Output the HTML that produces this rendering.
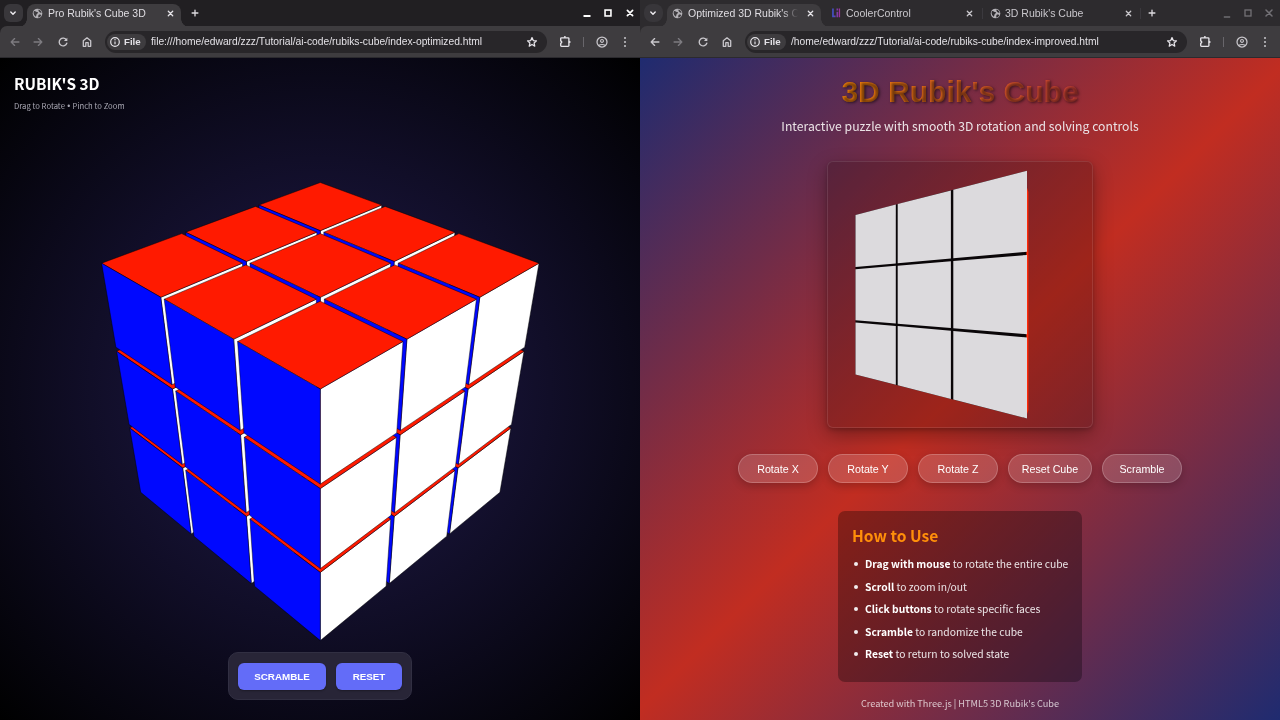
<!DOCTYPE html>
<html lang="en">
<head>
<meta charset="utf-8">
<title>Rubik's Cube comparison</title>
<style>
*{box-sizing:border-box;margin:0;padding:0}
html,body{width:1280px;height:720px;overflow:hidden;background:#000}
body{position:relative;font-family:"Liberation Sans",sans-serif;-webkit-font-smoothing:antialiased}
.win{position:absolute;top:0;width:640px;height:720px;overflow:hidden}
#w1{left:0}
#w2{left:640px}
/* ---------- browser chrome ---------- */
.strip{position:absolute;left:0;top:0;width:640px;height:40px;background:#211f22}
#w2 .strip{background:#2d2b2e}
.toolbar{position:absolute;left:0;top:26px;width:640px;height:32px;background:#3e3c3f;border-bottom:1px solid #2b2a2e;border-radius:7px 0 0 0}
.tsearch{position:absolute;left:4px;top:4px;width:19px;height:17.5px;border-radius:6px;background:#39373b}
#w2 .tsearch{border-radius:8px;background:#38363a}
.tab{position:absolute;top:4px;height:23px;border-radius:8px 8px 0 0;background:#3e3c3f}
.tab:before,.tab:after{content:"";position:absolute;bottom:0;width:8px;height:8px;background:radial-gradient(circle at 0 0,rgba(0,0,0,0) 7.5px,#3e3c3f 8px)}
.tab:before{left:-8px}
.tab:after{right:-8px;background:radial-gradient(circle at 100% 0,rgba(0,0,0,0) 7.5px,#3e3c3f 8px)}
.ttl,.url,.chip span,#p1 h1,#p1 .sub,.panel1 b,#p2 .lead,.btn2,.howto h2,.howto p,.foot{will-change:transform}
.ttl{position:absolute;top:7px;font-size:10.5px;line-height:13px;color:#dfdde2;white-space:nowrap;overflow:hidden}
.ttl.in{color:#c9c7cc}
.ico{position:absolute;overflow:visible}
.omni{position:absolute;left:105px;top:31px;width:442px;height:22px;border-radius:11px;background:#282629}
.chip{position:absolute;left:2.3px;top:3px;width:38.3px;height:15.6px;border-radius:8px;background:#3e3c3f}
.chip span{position:absolute;left:16.4px;top:1.3px;font-size:9.7px;line-height:13px;font-weight:bold;color:#e3e1e6}
.url{position:absolute;left:46.3px;top:4.2px;font-size:10.27px;line-height:13px;color:#e3e1e6;white-space:nowrap}
.sep{position:absolute;top:37px;width:1px;height:10px;background:#68666b}
.tsep{position:absolute;top:8px;width:1px;height:11px;background:#3b393e}
/* ---------- page 1 ---------- */
.page{position:absolute;left:0;top:58px;width:640px;height:662px;overflow:hidden}
#p1{background:radial-gradient(circle farthest-corner at 50% 50%,#221c50 0%,#000 100%)}
#p1 h1{position:absolute;left:14px;top:13.5px;font-family:"Noto Sans CJK SC","DejaVu Sans",sans-serif;font-weight:700;font-size:15.4px;line-height:22px;color:#fff;white-space:nowrap;letter-spacing:0}
#p1 .sub{position:absolute;left:14px;top:42px;font-family:"Noto Sans CJK SC","DejaVu Sans",sans-serif;font-size:7.7px;line-height:12px;color:#a9a8b3;white-space:nowrap}
#p1 svg.cube{position:absolute;left:0;top:0}
.panel1{position:absolute;left:228px;top:594px;width:184px;height:48px;border-radius:10px;background:#282537;border:1px solid #312f42}
.panel1 b{position:absolute;top:9.5px;height:27px;border-radius:6px;background:#636cf8;color:#fff;font-size:9.8px;line-height:27.3px;text-align:center;font-weight:bold;box-shadow:0 1px 2px rgba(0,0,0,.3)}
/* ---------- page 2 ---------- */
#p2{background:linear-gradient(135deg,#1f2b70 0%,#c12d21 50%,#1f2b70 100%);font-family:"Noto Sans CJK SC","DejaVu Sans",sans-serif;color:#fff}
#p2 h1{position:absolute;left:0;width:640px;top:12px;text-align:center;font-family:"Liberation Sans",sans-serif;font-size:30px;line-height:44px;font-weight:700;white-space:nowrap}
#p2 h1 span{display:inline-block;background:linear-gradient(90deg,#ee800a 0%,#cc4038 100%);-webkit-background-clip:text;background-clip:text;color:transparent;text-shadow:1.3px 1.3px 2.7px rgba(0,0,0,.5)}
#p2 .lead{position:absolute;left:0;width:640px;top:59px;text-align:center;font-size:12.2px;line-height:18px;color:#ebe3e6;white-space:nowrap}
.stage{position:absolute;left:187px;top:103px;width:266px;height:267px;border-radius:6px;background:rgba(20,0,0,.2);border:1px solid rgba(255,255,255,.1);box-shadow:0 7px 20px rgba(0,0,0,.32),0 2px 4px rgba(0,0,0,.18)}
#p2 svg.cube{position:absolute;left:0;top:0}
.btn2{position:absolute;top:396.4px;height:29px;border-radius:15px;background:rgba(255,255,255,.16);border:1px solid rgba(255,255,255,.2);color:#fff;font-family:"Liberation Sans",sans-serif;font-size:10.7px;line-height:28px;text-align:center;box-shadow:0 3px 8px rgba(0,0,0,.2)}
.howto{position:absolute;left:198px;top:453px;width:244px;height:171px;border-radius:7px;background:rgba(0,0,0,.3)}
.howto h2{position:absolute;left:14px;top:13px;font-size:15.6px;line-height:22px;font-weight:700;color:#ff8f0a;white-space:nowrap}
.howto p{position:absolute;left:27px;font-size:10.3px;line-height:16px;color:#ece6e8;white-space:nowrap}
.howto p b{font-weight:700;color:#fff}
.howto p:before{content:"";position:absolute;left:-11.5px;top:6px;width:4px;height:4px;border-radius:50%;background:#f1ecee}
.foot{position:absolute;left:0;width:640px;top:637.6px;text-align:center;font-size:9.2px;line-height:14px;color:rgba(255,255,255,.72);white-space:nowrap}
</style>
</head>
<body>
<!-- ================= WINDOW 1 ================= -->
<div class="win" id="w1">
  <div class="strip"></div>
  <div class="tsearch"></div>
  <div class="tab" style="left:27px;width:154px"></div>
  <div class="toolbar"></div>
  <div class="ttl" style="left:48px;width:112px">Pro Rubik's Cube 3D</div>
  <div class="omni"><div class="chip"><span>File</span></div><div class="url">file:///home/edward/zzz/Tutorial/ai-code/rubiks-cube/index-optimized.html</div></div>
  <div class="sep" style="left:583px"></div>
  <svg class="ico" style="left:8.30px;top:9.20px" width="10" height="8" viewBox="-5.0 -4.0 10 8" ><path d="M-2.2,-1 L0,1.2 L2.2,-1" fill="none" stroke="#f0eef2" stroke-width="1.4" stroke-linecap="round" stroke-linejoin="round"/></svg>
  <svg class="ico" style="left:31.60px;top:7.80px" width="11" height="11" viewBox="-5.5 -5.5 11 11" ><circle r="4.8" fill="#b3b1b6"/><path d="M-3.6,-2.6 C-2,-2.8 -1.2,-1.6 -0.2,-1.5 C0.9,-1.4 0.6,-0.2 -0.4,0.3 C-1.4,0.8 -0.8,2.2 -1.8,3.2 C-3,2.4 -4,0.8 -3.9,-0.9 Z M1.2,-4 C2.6,-3.6 3.8,-2.4 4.1,-0.9 C3.2,-0.4 2.4,-0.9 1.7,-1.7 C1,-2.5 0.6,-3.3 1.2,-4 Z M1.6,1 C2.6,0.7 3.6,1.1 3.7,1.7 C3.3,2.9 2.3,3.8 1.1,4.2 C0.5,3.4 0.6,1.5 1.6,1 Z" fill="#3e3c3f"/></svg>
  <svg class="ico" style="left:165.80px;top:8.80px" width="9" height="9" viewBox="-4.5 -4.5 9 9" ><path d="M-2.2,-2.2 L2.2,2.2 M2.2,-2.2 L-2.2,2.2" fill="none" stroke="#e6e4e9" stroke-width="1.3" stroke-linecap="round"/></svg>
  <svg class="ico" style="left:189.50px;top:8.30px" width="10" height="10" viewBox="-5.0 -5.0 10 10" ><path d="M-2.9,0 H2.9 M0,-2.9 V2.9" fill="none" stroke="#dddbe0" stroke-width="1.3" stroke-linecap="round"/></svg>
  <svg class="ico" style="left:581.50px;top:14.10px" width="10" height="4" viewBox="-5.0 -2.0 10 4" ><path d="M-3.5,0 H3.5" stroke="#ffffff" stroke-width="2" fill="none"/></svg>
  <svg class="ico" style="left:603.10px;top:8.40px" width="10" height="10" viewBox="-5.0 -5.0 10 10" ><rect x="-2.95" y="-2.95" width="5.9" height="5.9" fill="none" stroke="#ffffff" stroke-width="1.6"/></svg>
  <svg class="ico" style="left:624.50px;top:8.40px" width="10" height="10" viewBox="-5.0 -5.0 10 10" ><path d="M-2.6,-2.6 L2.6,2.6 M2.6,-2.6 L-2.6,2.6" fill="none" stroke="#ffffff" stroke-width="1.7" stroke-linecap="round"/></svg>
  <svg class="ico" style="left:8.90px;top:37.00px" width="12" height="10" viewBox="-6.0 -5.0 12 10" ><path d="M3.9,0 H-3.6 M-0.4,-3.4 L-3.8,0 L-0.4,3.4" fill="none" stroke="#7d7b80" stroke-width="1.35" stroke-linecap="round" stroke-linejoin="round"/></svg>
  <svg class="ico" style="left:32.40px;top:37.00px" width="12" height="10" viewBox="-6.0 -5.0 12 10" ><path d="M-3.9,0 H3.6 M0.4,-3.4 L3.8,0 L0.4,3.4" fill="none" stroke="#7d7b80" stroke-width="1.35" stroke-linecap="round" stroke-linejoin="round"/></svg>
  <svg class="ico" style="left:56.60px;top:36.00px" width="12" height="12" viewBox="-6.0 -6.0 12 12" ><path d="M3.5,-1.9 A3.9,3.9 0 1 0 3.8,1.2" fill="none" stroke="#c9c7cc" stroke-width="1.35" stroke-linecap="round"/><path d="M4.3,-4.3 V-0.9 H0.9 Z" fill="#c9c7cc"/></svg>
  <svg class="ico" style="left:80.50px;top:36.00px" width="12" height="12" viewBox="-6.0 -6.0 12 12" ><path d="M-3.7,4.3 V-1.3 L0,-4.2 L3.7,-1.3 V4.3 H1.2 V0.6 H-1.2 V4.3 Z" fill="none" stroke="#c9c7cc" stroke-width="1.3" stroke-linejoin="round"/></svg>
  <svg class="ico" style="left:109.30px;top:35.90px" width="12" height="12" viewBox="-6.0 -6.0 12 12" ><circle r="4.3" fill="none" stroke="#e6e4e9" stroke-width="1.2"/><path d="M0,-0.6 V2.3" stroke="#e6e4e9" stroke-width="1.2" fill="none"/><circle cy="-2.2" r="0.7" fill="#e6e4e9"/></svg>
  <svg class="ico" style="left:526.00px;top:36.00px" width="12" height="12" viewBox="-6.0 -6.0 12 12" ><polygon points="0.00,-4.40 1.29,-1.48 4.47,-1.15 2.09,0.98 2.76,4.10 0.00,2.50 -2.76,4.10 -2.09,0.98 -4.47,-1.15 -1.29,-1.48" fill="none" stroke="#e6e4e9" stroke-width="1.25" stroke-linejoin="round"/></svg>
  <svg class="ico" style="left:558.20px;top:35.00px" width="14" height="14" viewBox="-7.0 -7.0 14 14" ><path d="M-4.3,-1 V-3.4 a.8,.8 0 0 1 .8,-.8 H3.1 a.8,.8 0 0 1 .8,.8 V3.5 a.8,.8 0 0 1 -.8,.8 H-3.5 a.8,.8 0 0 1 -.8,-.8 V1.1 a1.05,1.05 0 0 0 0,-2.1 Z" fill="none" stroke="#e6e4e9" stroke-width="1.35" stroke-linejoin="round"/><circle cx="-0.1" cy="-4.9" r="1" fill="#e6e4e9"/><circle cx="4.6" cy="0" r="1" fill="#e6e4e9"/></svg>
  <svg class="ico" style="left:594.50px;top:35.00px" width="14" height="14" viewBox="-7.0 -7.0 14 14" ><circle r="5" fill="none" stroke="#c9c7cc" stroke-width="1.25"/><circle cy="-1.1" r="1.45" fill="none" stroke="#c9c7cc" stroke-width="1.05"/><path d="M-3,3.2 C-1.6,2.2 1.6,2.2 3,3.2" fill="none" stroke="#c9c7cc" stroke-width="1.15"/></svg>
  <svg class="ico" style="left:623.30px;top:35.00px" width="4" height="14" viewBox="-2.0 -7.0 4 14" ><circle cy="-4.1" r="1" fill="#c9c7cc"/><circle r="1" fill="#c9c7cc"/><circle cy="4.1" r="1" fill="#c9c7cc"/></svg>
  <div class="page" id="p1">
    <svg class="cube" width="640" height="662" viewBox="0 0 640 662" stroke="#000" stroke-opacity=".7" stroke-width=".65" stroke-linejoin="round"><polygon points="320.3,331.0 374.7,299.7 371.9,360.7 320.3,393.5" fill="#ffffff"/><polygon points="320.3,331.0 374.7,299.7 320.3,271.7 265.9,299.7" fill="#ff1a00"/><polygon points="320.3,331.0 265.9,299.7 268.7,360.7 320.3,393.5" fill="#0008ff"/><polygon points="255.9,368.0 317.3,332.7 317.4,395.4 259.6,432.2" fill="#ffffff"/><polygon points="255.9,368.0 317.3,332.7 262.9,301.3 202.0,332.7" fill="#ff1a00"/><polygon points="255.9,368.0 202.0,332.7 208.4,395.4 259.6,432.2" fill="#0008ff"/><polygon points="320.3,256.9 378.0,228.0 374.8,296.3 320.3,327.5" fill="#ffffff"/><polygon points="320.3,256.9 378.0,228.0 320.3,202.3 262.6,228.0" fill="#ff1a00"/><polygon points="320.3,256.9 262.6,228.0 265.8,296.3 320.3,327.5" fill="#0008ff"/><polygon points="384.7,368.0 438.6,332.7 432.2,395.4 381.0,432.2" fill="#ffffff"/><polygon points="384.7,368.0 438.6,332.7 377.7,301.3 323.3,332.7" fill="#ff1a00"/><polygon points="384.7,368.0 323.3,332.7 323.2,395.4 381.0,432.2" fill="#0008ff"/><polygon points="182.7,410.1 252.5,370.0 256.4,434.3 191.1,475.9" fill="#ffffff"/><polygon points="182.7,410.1 252.5,370.0 198.6,334.5 129.7,370.0" fill="#ff1a00"/><polygon points="182.7,410.1 129.7,370.0 140.7,434.3 191.1,475.9" fill="#0008ff"/><polygon points="251.5,291.4 317.1,258.6 317.3,329.2 255.7,364.4" fill="#ffffff"/><polygon points="251.5,291.4 317.1,258.6 259.4,229.5 194.3,258.6" fill="#ff1a00"/><polygon points="251.5,291.4 194.3,258.6 201.6,329.2 255.7,364.4" fill="#0008ff"/><polygon points="320.3,172.7 381.7,147.1 378.1,224.2 320.3,253.0" fill="#ffffff"/><polygon points="320.3,172.7 381.7,147.1 320.3,124.5 258.9,147.1" fill="#ff1a00"/><polygon points="320.3,172.7 258.9,147.1 262.5,224.2 320.3,253.0" fill="#0008ff"/><polygon points="320.3,410.1 381.7,370.0 378.1,434.3 320.3,475.9" fill="#ffffff"/><polygon points="320.3,410.1 381.7,370.0 320.3,334.5 258.9,370.0" fill="#ff1a00"/><polygon points="320.3,410.1 258.9,370.0 262.5,434.3 320.3,475.9" fill="#0008ff"/><polygon points="389.1,291.4 446.3,258.6 439.0,329.2 384.9,364.4" fill="#ffffff"/><polygon points="389.1,291.4 446.3,258.6 381.2,229.5 323.5,258.6" fill="#ff1a00"/><polygon points="389.1,291.4 323.5,258.6 323.3,329.2 384.9,364.4" fill="#0008ff"/><polygon points="457.9,410.1 510.9,370.0 499.9,434.3 449.5,475.9" fill="#ffffff"/><polygon points="457.9,410.1 510.9,370.0 442.0,334.5 388.1,370.0" fill="#ff1a00"/><polygon points="457.9,410.1 388.1,370.0 384.2,434.3 449.5,475.9" fill="#0008ff"/><polygon points="172.5,331.0 247.8,293.3 252.3,366.4 182.2,406.4" fill="#ffffff"/><polygon points="172.5,331.0 247.8,293.3 190.7,260.2 116.6,293.3" fill="#ff1a00"/><polygon points="172.5,331.0 116.6,293.3 129.1,366.4 182.2,406.4" fill="#0008ff"/><polygon points="246.4,203.5 316.8,174.2 317.1,254.6 251.3,287.3" fill="#ffffff"/><polygon points="246.4,203.5 316.8,174.2 255.5,148.4 185.7,174.2" fill="#ff1a00"/><polygon points="246.4,203.5 185.7,174.2 193.9,254.6 251.3,287.3" fill="#0008ff"/><polygon points="246.4,458.5 316.8,412.4 317.1,478.2 251.3,525.6" fill="#ffffff"/><polygon points="246.4,458.5 316.8,412.4 255.5,372.0 185.7,412.4" fill="#ff1a00"/><polygon points="246.4,458.5 185.7,412.4 193.9,478.2 251.3,525.6" fill="#0008ff"/><polygon points="320.3,331.0 385.9,293.3 381.9,366.4 320.3,406.4" fill="#ffffff"/><polygon points="320.3,331.0 385.9,293.3 320.3,260.2 254.7,293.3" fill="#ff1a00"/><polygon points="320.3,331.0 254.7,293.3 258.7,366.4 320.3,406.4" fill="#0008ff"/><polygon points="394.2,203.5 454.9,174.2 446.7,254.6 389.3,287.3" fill="#ffffff"/><polygon points="394.2,203.5 454.9,174.2 385.1,148.4 323.8,174.2" fill="#ff1a00"/><polygon points="394.2,203.5 323.8,174.2 323.5,254.6 389.3,287.3" fill="#0008ff"/><polygon points="394.2,458.5 454.9,412.4 446.7,478.2 389.3,525.6" fill="#ffffff"/><polygon points="394.2,458.5 454.9,412.4 385.1,372.0 323.8,412.4" fill="#ff1a00"/><polygon points="394.2,458.5 323.8,412.4 323.5,478.2 389.3,525.6" fill="#0008ff"/><polygon points="468.1,331.0 524.0,293.3 511.5,366.4 458.4,406.4" fill="#ffffff"/><polygon points="468.1,331.0 524.0,293.3 449.9,260.2 392.8,293.3" fill="#ff1a00"/><polygon points="468.1,331.0 392.8,293.3 388.3,366.4 458.4,406.4" fill="#0008ff"/><polygon points="160.8,239.3 242.4,205.2 247.6,289.2 172.0,326.7" fill="#ffffff"/><polygon points="160.8,239.3 242.4,205.2 181.7,175.6 101.6,205.2" fill="#ff1a00"/><polygon points="160.8,239.3 101.6,205.2 115.9,289.2 172.0,326.7" fill="#0008ff"/><polygon points="240.5,376.9 316.6,333.1 316.8,408.7 246.1,454.7" fill="#ffffff"/><polygon points="240.5,376.9 316.6,333.1 251.0,295.1 175.7,333.1" fill="#ff1a00"/><polygon points="240.5,376.9 175.7,333.1 185.2,408.7 246.1,454.7" fill="#0008ff"/><polygon points="320.3,239.3 390.7,205.2 386.1,289.2 320.3,326.7" fill="#ffffff"/><polygon points="320.3,239.3 390.7,205.2 320.3,175.6 249.9,205.2" fill="#ff1a00"/><polygon points="320.3,239.3 249.9,205.2 254.5,289.2 320.3,326.7" fill="#0008ff"/><polygon points="320.3,514.4 390.7,461.1 386.1,528.2 320.3,582.6" fill="#ffffff"/><polygon points="320.3,514.4 390.7,461.1 320.3,414.7 249.9,461.1" fill="#ff1a00"/><polygon points="320.3,514.4 249.9,461.1 254.5,528.2 320.3,582.6" fill="#0008ff"/><polygon points="400.1,376.9 464.9,333.1 455.4,408.7 394.5,454.7" fill="#ffffff"/><polygon points="400.1,376.9 464.9,333.1 389.6,295.1 324.0,333.1" fill="#ff1a00"/><polygon points="400.1,376.9 324.0,333.1 323.8,408.7 394.5,454.7" fill="#0008ff"/><polygon points="479.8,239.3 539.0,205.2 524.7,289.2 468.6,326.7" fill="#ffffff"/><polygon points="479.8,239.3 539.0,205.2 458.9,175.6 398.2,205.2" fill="#ff1a00"/><polygon points="479.8,239.3 398.2,205.2 393.0,289.2 468.6,326.7" fill="#0008ff"/><polygon points="233.7,281.2 316.3,241.2 316.6,328.9 240.2,372.4" fill="#ffffff"/><polygon points="233.7,281.2 316.3,241.2 245.9,206.9 164.2,241.2" fill="#ff1a00"/><polygon points="233.7,281.2 164.2,241.2 175.2,328.9 240.2,372.4" fill="#0008ff"/><polygon points="320.3,430.6 396.4,379.3 391.0,457.3 320.3,510.6" fill="#ffffff"/><polygon points="320.3,430.6 396.4,379.3 320.3,335.3 244.2,379.3" fill="#ff1a00"/><polygon points="320.3,430.6 244.2,379.3 249.6,457.3 320.3,510.6" fill="#0008ff"/><polygon points="406.9,281.2 476.4,241.2 465.4,328.9 400.4,372.4" fill="#ffffff"/><polygon points="406.9,281.2 476.4,241.2 394.7,206.9 324.3,241.2" fill="#ff1a00"/><polygon points="406.9,281.2 324.3,241.2 324.0,328.9 400.4,372.4" fill="#0008ff"/><polygon points="320.3,331.0 403.0,283.5 396.7,374.9 320.3,426.1" fill="#ffffff"/><polygon points="320.3,331.0 403.0,283.5 320.3,243.2 237.6,283.5" fill="#ff1a00"/><polygon points="320.3,331.0 237.6,283.5 243.9,374.9 320.3,426.1" fill="#0008ff"/></svg>
    <h1>RUBIK'S 3D</h1>
    <div class="sub">Drag to Rotate <span style="font-family:'Liberation Sans',sans-serif;font-size:8.5px;margin:0 .6px">•</span> Pinch to Zoom</div>
    <div class="panel1"><b style="left:9.4px;width:88px">SCRAMBLE</b><b style="left:106.6px;width:66px">RESET</b></div>
  </div>
</div>
<!-- ================= WINDOW 2 ================= -->
<div class="win" id="w2">
  <div class="strip"></div>
  <div class="tsearch"></div>
  <div class="tab" style="left:27px;width:154px"></div>
  <div class="toolbar"></div>
  <div class="ttl" style="left:48px;width:110px;-webkit-mask-image:linear-gradient(90deg,#000 86%,transparent 100%);mask-image:linear-gradient(90deg,#000 86%,transparent 100%)">Optimized 3D Rubik's Cube</div>
  <div class="ttl in" style="left:206px;width:112px">CoolerControl</div>
  <div class="ttl in" style="left:365px;width:112px">3D Rubik's Cube</div>
  <div class="tsep" style="left:342px"></div>
  <div class="tsep" style="left:500px"></div>
  <div class="omni"><div class="chip"><span>File</span></div><div class="url">/home/edward/zzz/Tutorial/ai-code/rubiks-cube/index-improved.html</div></div>
  <div class="sep" style="left:583px"></div>
  <svg class="ico" style="left:8.30px;top:9.20px" width="10" height="8" viewBox="-5.0 -4.0 10 8" ><path d="M-2.2,-1 L0,1.2 L2.2,-1" fill="none" stroke="#f0eef2" stroke-width="1.4" stroke-linecap="round" stroke-linejoin="round"/></svg>
  <svg class="ico" style="left:31.60px;top:7.80px" width="11" height="11" viewBox="-5.5 -5.5 11 11" ><circle r="4.8" fill="#b3b1b6"/><path d="M-3.6,-2.6 C-2,-2.8 -1.2,-1.6 -0.2,-1.5 C0.9,-1.4 0.6,-0.2 -0.4,0.3 C-1.4,0.8 -0.8,2.2 -1.8,3.2 C-3,2.4 -4,0.8 -3.9,-0.9 Z M1.2,-4 C2.6,-3.6 3.8,-2.4 4.1,-0.9 C3.2,-0.4 2.4,-0.9 1.7,-1.7 C1,-2.5 0.6,-3.3 1.2,-4 Z M1.6,1 C2.6,0.7 3.6,1.1 3.7,1.7 C3.3,2.9 2.3,3.8 1.1,4.2 C0.5,3.4 0.6,1.5 1.6,1 Z" fill="#3e3c3f"/></svg>
  <svg class="ico" style="left:165.80px;top:8.80px" width="9" height="9" viewBox="-4.5 -4.5 9 9" ><path d="M-2.2,-2.2 L2.2,2.2 M2.2,-2.2 L-2.2,2.2" fill="none" stroke="#e6e4e9" stroke-width="1.3" stroke-linecap="round"/></svg>
  <svg class="ico" style="left:190.80px;top:7.80px" width="10" height="10" viewBox="-5.0 -5.0 10 10" ><defs><linearGradient id="ccg" x1="0" y1="0" x2="1" y2="0"><stop offset="0" stop-color="#3a55d6"/><stop offset="1" stop-color="#b42fa4"/></linearGradient></defs><path d="M-3.9,-4.4 H-2.2 V2.4 H-0.4 V4.3 H-3.9 Z M0.5,-1.2 H2.2 V4.3 H0.5 Z M0.5,-4.4 H2.2 V-2.5 H0.5 Z M2.9,-4.4 H4.1 V4.3 H2.9 Z" fill="url(#ccg)" opacity=".9"/></svg>
  <svg class="ico" style="left:324.50px;top:8.80px" width="9" height="9" viewBox="-4.5 -4.5 9 9" ><path d="M-2.2,-2.2 L2.2,2.2 M2.2,-2.2 L-2.2,2.2" fill="none" stroke="#c9c7cc" stroke-width="1.3" stroke-linecap="round"/></svg>
  <svg class="ico" style="left:349.50px;top:7.80px" width="11" height="11" viewBox="-5.5 -5.5 11 11" ><circle r="4.8" fill="#b3b1b6"/><path d="M-3.6,-2.6 C-2,-2.8 -1.2,-1.6 -0.2,-1.5 C0.9,-1.4 0.6,-0.2 -0.4,0.3 C-1.4,0.8 -0.8,2.2 -1.8,3.2 C-3,2.4 -4,0.8 -3.9,-0.9 Z M1.2,-4 C2.6,-3.6 3.8,-2.4 4.1,-0.9 C3.2,-0.4 2.4,-0.9 1.7,-1.7 C1,-2.5 0.6,-3.3 1.2,-4 Z M1.6,1 C2.6,0.7 3.6,1.1 3.7,1.7 C3.3,2.9 2.3,3.8 1.1,4.2 C0.5,3.4 0.6,1.5 1.6,1 Z" fill="#2d2b2e"/></svg>
  <svg class="ico" style="left:483.50px;top:8.80px" width="9" height="9" viewBox="-4.5 -4.5 9 9" ><path d="M-2.2,-2.2 L2.2,2.2 M2.2,-2.2 L-2.2,2.2" fill="none" stroke="#c9c7cc" stroke-width="1.3" stroke-linecap="round"/></svg>
  <svg class="ico" style="left:507.00px;top:8.30px" width="10" height="10" viewBox="-5.0 -5.0 10 10" ><path d="M-2.9,0 H2.9 M0,-2.9 V2.9" fill="none" stroke="#dddbe0" stroke-width="1.3" stroke-linecap="round"/></svg>
  <svg class="ico" style="left:581.50px;top:14.60px" width="10" height="4" viewBox="-5.0 -2.0 10 4" ><path d="M-3.2,0 H3.2" stroke="#737176" stroke-width="1.4" fill="none"/></svg>
  <svg class="ico" style="left:603.00px;top:8.30px" width="10" height="10" viewBox="-5.0 -5.0 10 10" ><rect x="-3" y="-3" width="6" height="6" fill="none" stroke="#737176" stroke-width="1.3"/></svg>
  <svg class="ico" style="left:624.30px;top:8.30px" width="10" height="10" viewBox="-5.0 -5.0 10 10" ><path d="M-3,-3 L3,3 M3,-3 L-3,3" fill="none" stroke="#737176" stroke-width="1.5" stroke-linecap="round"/></svg>
  <svg class="ico" style="left:8.90px;top:37.00px" width="12" height="10" viewBox="-6.0 -5.0 12 10" ><path d="M3.9,0 H-3.6 M-0.4,-3.4 L-3.8,0 L-0.4,3.4" fill="none" stroke="#c9c7cc" stroke-width="1.35" stroke-linecap="round" stroke-linejoin="round"/></svg>
  <svg class="ico" style="left:32.40px;top:37.00px" width="12" height="10" viewBox="-6.0 -5.0 12 10" ><path d="M-3.9,0 H3.6 M0.4,-3.4 L3.8,0 L0.4,3.4" fill="none" stroke="#7d7b80" stroke-width="1.35" stroke-linecap="round" stroke-linejoin="round"/></svg>
  <svg class="ico" style="left:56.60px;top:36.00px" width="12" height="12" viewBox="-6.0 -6.0 12 12" ><path d="M3.5,-1.9 A3.9,3.9 0 1 0 3.8,1.2" fill="none" stroke="#c9c7cc" stroke-width="1.35" stroke-linecap="round"/><path d="M4.3,-4.3 V-0.9 H0.9 Z" fill="#c9c7cc"/></svg>
  <svg class="ico" style="left:80.50px;top:36.00px" width="12" height="12" viewBox="-6.0 -6.0 12 12" ><path d="M-3.7,4.3 V-1.3 L0,-4.2 L3.7,-1.3 V4.3 H1.2 V0.6 H-1.2 V4.3 Z" fill="none" stroke="#c9c7cc" stroke-width="1.3" stroke-linejoin="round"/></svg>
  <svg class="ico" style="left:109.30px;top:35.90px" width="12" height="12" viewBox="-6.0 -6.0 12 12" ><circle r="4.3" fill="none" stroke="#e6e4e9" stroke-width="1.2"/><path d="M0,-0.6 V2.3" stroke="#e6e4e9" stroke-width="1.2" fill="none"/><circle cy="-2.2" r="0.7" fill="#e6e4e9"/></svg>
  <svg class="ico" style="left:526.00px;top:36.00px" width="12" height="12" viewBox="-6.0 -6.0 12 12" ><polygon points="0.00,-4.40 1.29,-1.48 4.47,-1.15 2.09,0.98 2.76,4.10 0.00,2.50 -2.76,4.10 -2.09,0.98 -4.47,-1.15 -1.29,-1.48" fill="none" stroke="#e6e4e9" stroke-width="1.25" stroke-linejoin="round"/></svg>
  <svg class="ico" style="left:558.20px;top:35.00px" width="14" height="14" viewBox="-7.0 -7.0 14 14" ><path d="M-4.3,-1 V-3.4 a.8,.8 0 0 1 .8,-.8 H3.1 a.8,.8 0 0 1 .8,.8 V3.5 a.8,.8 0 0 1 -.8,.8 H-3.5 a.8,.8 0 0 1 -.8,-.8 V1.1 a1.05,1.05 0 0 0 0,-2.1 Z" fill="none" stroke="#e6e4e9" stroke-width="1.35" stroke-linejoin="round"/><circle cx="-0.1" cy="-4.9" r="1" fill="#e6e4e9"/><circle cx="4.6" cy="0" r="1" fill="#e6e4e9"/></svg>
  <svg class="ico" style="left:594.50px;top:35.00px" width="14" height="14" viewBox="-7.0 -7.0 14 14" ><circle r="5" fill="none" stroke="#c9c7cc" stroke-width="1.25"/><circle cy="-1.1" r="1.45" fill="none" stroke="#c9c7cc" stroke-width="1.05"/><path d="M-3,3.2 C-1.6,2.2 1.6,2.2 3,3.2" fill="none" stroke="#c9c7cc" stroke-width="1.15"/></svg>
  <svg class="ico" style="left:623.30px;top:35.00px" width="4" height="14" viewBox="-2.0 -7.0 4 14" ><circle cy="-4.1" r="1" fill="#c9c7cc"/><circle r="1" fill="#c9c7cc"/><circle cy="4.1" r="1" fill="#c9c7cc"/></svg>
  <div class="page" id="p2">
    <h1><span>3D Rubik's Cube</span></h1>
    <div class="lead">Interactive puzzle with smooth 3D rotation and solving controls</div>
    <div class="stage"></div>
    <svg class="cube" width="640" height="662" viewBox="0 0 640 662"><polygon points="215.5,157.0 387.0,112.7 387.0,360.4 215.5,316.5" fill="#0a0608"/><polygon points="386.4,128 388.4,134 388.4,352 386.4,358" fill="#ff2a08"/><polygon points="215.5,157.0 255.8,146.6 255.8,205.5 215.5,209.1" fill="#dcdadd"/><polygon points="215.5,211.2 255.8,207.8 255.8,265.6 215.5,262.3" fill="#dcdadd"/><polygon points="215.5,264.4 255.8,267.9 255.8,326.8 215.5,316.5" fill="#dcdadd"/><polygon points="257.7,146.1 310.9,132.4 310.9,200.5 257.7,205.3" fill="#dcdadd"/><polygon points="257.7,207.7 310.9,203.2 310.9,270.0 257.7,265.7" fill="#dcdadd"/><polygon points="257.7,268.1 310.9,272.8 310.9,340.9 257.7,327.3" fill="#dcdadd"/><polygon points="313.3,131.7 387.0,112.7 387.0,193.7 313.3,200.3" fill="#dcdadd"/><polygon points="313.3,203.0 387.0,196.9 387.0,276.2 313.3,270.2" fill="#dcdadd"/><polygon points="313.3,273.0 387.0,279.4 387.0,360.4 313.3,341.5" fill="#dcdadd"/></svg>
    <div class="btn2" style="left:98px;width:80px">Rotate X</div>
    <div class="btn2" style="left:188px;width:80px">Rotate Y</div>
    <div class="btn2" style="left:278px;width:80px">Rotate Z</div>
    <div class="btn2" style="left:368px;width:84px">Reset Cube</div>
    <div class="btn2" style="left:462px;width:80px">Scramble</div>
    <div class="howto">
      <h2>How to Use</h2>
      <p style="top:45px"><b>Drag with mouse</b> to rotate the entire cube</p>
      <p style="top:67.5px"><b>Scroll</b> to zoom in/out</p>
      <p style="top:90px"><b>Click buttons</b> to rotate specific faces</p>
      <p style="top:112.5px"><b>Scramble</b> to randomize the cube</p>
      <p style="top:135px"><b>Reset</b> to return to solved state</p>
    </div>
    <div class="foot">Created with Three.js | HTML5 3D Rubik's Cube</div>
  </div>
</div>
</body>
</html>
